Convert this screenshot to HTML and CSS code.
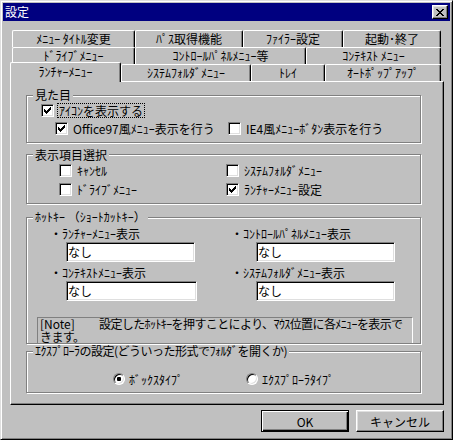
FILE: index.html
```html
<!DOCTYPE html>
<html lang="ja">
<head>
<meta charset="utf-8">
<title>設定</title>
<link rel="stylesheet" href="styles.css">
</head>
<body>
<div class="window">
  <div class="titlebar">
    <span class="title">設定</span>
    <span class="close-btn" aria-label="閉じる">
      <svg width="8" height="7" viewBox="0 0 8 7" shape-rendering="crispEdges"><path fill="#000" d="M0 0h2v1H0zM6 0h2v1H6zM1 1h2v1H1zM5 1h2v1H5zM2 2h4v1H2zM3 3h2v1H3zM2 4h4v1H2zM1 5h2v1H1zM5 5h2v1H5zM0 6h2v1H0zM6 6h2v1H6z"/></svg>
    </span>
  </div>

  <div class="tabs">
    <div class="tab-row row1">
      <div class="tab">ﾒﾆｭｰ ﾀｲﾄﾙ変更</div>
      <div class="tab">ﾊﾟｽ取得機能</div>
      <div class="tab">ﾌｧｲﾗｰ設定</div>
      <div class="tab">起動･終了</div>
    </div>
    <div class="tab-row row2">
      <div class="tab">ﾄﾞﾗｲﾌﾞﾒﾆｭｰ</div>
      <div class="tab">ｺﾝﾄﾛｰﾙﾊﾟﾈﾙﾒﾆｭｰ等</div>
      <div class="tab">ｺﾝﾃｷｽﾄ ﾒﾆｭｰ</div>
    </div>
    <div class="tab-row row3">
      <div class="tab active">ﾗﾝﾁｬｰﾒﾆｭｰ</div>
      <div class="tab">ｼｽﾃﾑﾌｫﾙﾀﾞﾒﾆｭｰ</div>
      <div class="tab">ﾄﾚｲ</div>
      <div class="tab">ｵｰﾄﾎﾟｯﾌﾟｱｯﾌﾟ</div>
    </div>
  </div>

  <div class="panel">
    <div class="group g-look">
      <div class="legend">見た目</div>
      <div class="row r-icon">
        <span class="cb"><svg width="7" height="7" viewBox="0 0 7 7" shape-rendering="crispEdges"><path fill="#000" d="M0 2h1v3H0zM1 3h1v3H1zM2 4h1v3H2zM3 3h1v3H3zM4 2h1v3H4zM5 1h1v3H5zM6 0h1v3H6z"/></svg></span>
        <span class="lbl focus">ｱｲｺﾝを表示する</span>
      </div>
      <div class="row r-style">
        <div class="item w-office">
          <span class="cb"><svg width="7" height="7" viewBox="0 0 7 7" shape-rendering="crispEdges"><path fill="#000" d="M0 2h1v3H0zM1 3h1v3H1zM2 4h1v3H2zM3 3h1v3H3zM4 2h1v3H4zM5 1h1v3H5zM6 0h1v3H6z"/></svg></span>
          <span class="lbl">Office97風ﾒﾆｭｰ表示を行う</span>
        </div>
        <div class="item">
          <span class="cb"></span>
          <span class="lbl">IE4風ﾒﾆｭｰﾎﾞﾀﾝ表示を行う</span>
        </div>
      </div>
    </div>

    <div class="group g-items">
      <div class="legend">表示項目選択</div>
      <div class="row r-items">
        <div class="item w-items"><span class="cb"></span><span class="lbl">ｷｬﾝｾﾙ</span></div>
        <div class="item"><span class="cb"></span><span class="lbl">ｼｽﾃﾑﾌｫﾙﾀﾞﾒﾆｭｰ</span></div>
      </div>
      <div class="row r-items">
        <div class="item w-items"><span class="cb"></span><span class="lbl">ﾄﾞﾗｲﾌﾞﾒﾆｭｰ</span></div>
        <div class="item">
          <span class="cb"><svg width="7" height="7" viewBox="0 0 7 7" shape-rendering="crispEdges"><path fill="#000" d="M0 2h1v3H0zM1 3h1v3H1zM2 4h1v3H2zM3 3h1v3H3zM4 2h1v3H4zM5 1h1v3H5zM6 0h1v3H6z"/></svg></span>
          <span class="lbl">ﾗﾝﾁｬｰﾒﾆｭｰ設定</span>
        </div>
      </div>
    </div>

    <div class="group g-hotkey">
      <div class="legend">ﾎｯﾄｷｰ （ｼｮｰﾄｶｯﾄｷｰ）</div>
      <div class="hk-grid">
        <div class="hk-col">
          <div class="hk-label">・ﾗﾝﾁｬｰﾒﾆｭｰ表示</div>
          <div class="textbox tb-left">なし</div>
          <div class="hk-label">・ｺﾝﾃｷｽﾄﾒﾆｭｰ表示</div>
          <div class="textbox tb-left-wide">なし</div>
        </div>
        <div class="hk-col">
          <div class="hk-label">・ｺﾝﾄﾛｰﾙﾊﾟﾈﾙﾒﾆｭｰ表示</div>
          <div class="textbox tb-right">なし</div>
          <div class="hk-label">・ｼｽﾃﾑﾌｫﾙﾀﾞﾒﾆｭｰ表示</div>
          <div class="textbox tb-right">なし</div>
        </div>
      </div>
      <div class="note"><span class="note-tag">[Note]</span>設定したﾎｯﾄｷｰを押すことにより、ﾏｳｽ位置に各ﾒﾆｭｰを表示で<br>きます。</div>
    </div>

    <div class="group g-explorer">
      <div class="legend legend-tight">ｴｸｽﾌﾟﾛｰﾗの設定(どういった形式でﾌｫﾙﾀﾞを開くか)</div>
      <div class="row r-radio">
        <div class="item w-radio"><span class="rb"><span class="dot"></span></span><span class="lbl">ﾎﾞｯｸｽﾀｲﾌﾟ</span></div>
        <div class="item"><span class="rb"></span><span class="lbl">ｴｸｽﾌﾟﾛｰﾗﾀｲﾌﾟ</span></div>
      </div>
    </div>
  </div>

  <div class="buttons">
    <button class="btn default">OK</button>
    <button class="btn">キャンセル</button>
  </div>
</div>
</body>
</html>
```

FILE: styles.css
```css
* { box-sizing: border-box; }

html, body {
  margin: 0;
  padding: 0;
  background: #c0c0c0;
}

body {
  width: 453px;
  height: 440px;
  overflow: hidden;
  font-family: "Noto Sans CJK JP", "Noto Sans", sans-serif;
  font-size: 12px;
  color: #000;
}

.window {
  width: 453px;
  height: 440px;
  background: #c0c0c0;
  border: 1px solid;
  border-color: #dfdfdf #000 #000 #dfdfdf;
  box-shadow: inset 1px 1px #fff, inset -1px -1px #808080;
  padding: 2px;
}

/* title bar */
.titlebar {
  height: 18px;
  background: #000080;
  display: flex;
  align-items: center;
  justify-content: space-between;
  padding: 0 2px 0 2px;
}

.title {
  color: #fff;
  line-height: 18px;
}

.close-btn {
  width: 16px;
  height: 14px;
  background: #c0c0c0;
  border: 1px solid;
  border-color: #fff #000 #000 #fff;
  box-shadow: inset -1px -1px #808080, inset 1px 1px #dfdfdf;
  display: flex;
  align-items: center;
  justify-content: center;
}

/* tabs */
.tabs {
  margin-top: 9px;
}

.tab-row {
  display: grid;
  grid-template-rows: 17px;
  height: 17px;
  margin-left: 9px;
}

.row1 { grid-template-columns: 123px 108px 100px 98px; }
.row2 { grid-template-columns: 123px 171px 135px; }
.row3 { grid-template-columns: 111px 130px 74px 116px; margin-left: 7px; }

.tab {
  height: 17px;
  background: #c0c0c0;
  border-top: 1px solid #fff;
  border-left: 1px solid #fff;
  border-right: 1px solid #000;
  border-radius: 2px 2px 0 0;
  box-shadow: inset -1px 0 #808080;
  text-align: center;
  line-height: 15px;
  white-space: nowrap;
}

.tab.active {
  height: 20px;
  margin-top: -2px;
  padding-top: 1px;
  line-height: 15px;
  position: relative;
  z-index: 1;
}

/* panel */
.panel {
  width: 434px;
  height: 324px;
  margin-left: 7px;
  border: 1px solid;
  border-color: #fff #000 #000 #fff;
  box-shadow: inset -1px -1px #808080;
  padding: 13px 0 0 15px;
}

.group {
  width: 395px;
  border: 1px solid #808080;
  box-shadow: inset 1px 1px #fff, 1px 1px #fff;
}

.legend {
  display: table;
  margin: -7px 0 0 6px;
  padding: 0 2px;
  line-height: 12px;
  background: #c0c0c0;
  white-space: nowrap;
}

.legend-tight {
  letter-spacing: -0.5px;
}

.row {
  display: flex;
  align-items: center;
}

.item {
  display: flex;
  align-items: center;
}

.cb {
  width: 13px;
  height: 13px;
  flex: none;
  background: #fff;
  border: 1px solid;
  border-color: #808080 #fff #fff #808080;
  box-shadow: inset 1px 1px #000, inset -1px -1px #dfdfdf;
  display: flex;
  align-items: center;
  justify-content: center;
}

.lbl {
  margin-left: 3px;
  padding: 0 1px;
  border: 1px dotted transparent;
  line-height: 13px;
  white-space: nowrap;
}

.lbl.focus {
  border-color: #000;
}

/* group 1 */
.g-look {
  height: 48px;
}

.r-icon { height: 18px; padding-left: 14px; }
.r-style { height: 18px; padding-left: 28px; }
.w-office { width: 173px; }

/* group 2 */
.g-items {
  height: 50px;
  margin-top: 11px;
  padding-top: 1px;
}

.r-items { height: 19px; padding-left: 32px; }
.w-items { width: 167px; }

/* group 3 */
.g-hotkey {
  margin-top: 13px;
}

.hk-grid {
  display: grid;
  grid-template-columns: 181px auto;
  padding-left: 23px;
  margin-top: 3px;
}

.hk-label {
  height: 16px;
  line-height: 16px;
  white-space: nowrap;
}

.textbox {
  height: 20px;
  background: #fff;
  border: 1px solid;
  border-color: #808080 #fff #fff #808080;
  box-shadow: inset 1px 1px #000, inset -1px -1px #dfdfdf;
  padding-left: 1px;
  line-height: 17px;
  margin-bottom: 3px;
}

.tb-left { width: 129px; margin-left: 16px; }
.tb-left-wide { width: 131px; margin-left: 16px; }
.tb-right { width: 139px; margin-left: 25px; }

.note {
  width: 376px;
  height: 26px;
  margin: 13px 0 0 10px;
  border-top: 1px solid #808080;
  border-left: 1px solid #808080;
  border-right: 1px solid #fff;
  padding-left: 2px;
  line-height: 12.5px;
  letter-spacing: -0.6px;
  white-space: nowrap;
}

.note-tag {
  display: inline-block;
  width: 59px;
  letter-spacing: 0;
}

/* group 4 */
.g-explorer {
  margin-top: 7px;
  padding-bottom: 3px;
}

.r-radio {
  height: 20px;
  margin-top: 12px;
  padding-left: 86px;
}

.w-radio { width: 133px; }

.rb {
  width: 12px;
  height: 12px;
  flex: none;
  border-radius: 50%;
  background: #fff;
  border: 1px solid;
  border-color: #808080 #fff #fff #808080;
  box-shadow: inset 1px 1px #000, inset -1px -1px #dfdfdf;
  display: flex;
  align-items: center;
  justify-content: center;
}

.rb + .lbl { margin-left: 2px; }

.dot {
  width: 4px;
  height: 4px;
  border-radius: 1px;
  background: #000;
}

/* buttons */
.buttons {
  display: flex;
  justify-content: flex-end;
  gap: 7px;
  margin-top: 5px;
  padding-right: 6px;
}

.btn {
  width: 88px;
  height: 22px;
  padding: 0;
  font: inherit;
  color: #000;
  background: #c0c0c0;
  border: 1px solid;
  border-color: #fff #000 #000 #fff;
  box-shadow: inset -1px -1px #808080, inset 1px 1px #dfdfdf;
}

.btn.default {
  border-color: #000;
  box-shadow: inset 1px 1px #fff, inset -1px -1px #000, inset -2px -2px #808080;
}
```
